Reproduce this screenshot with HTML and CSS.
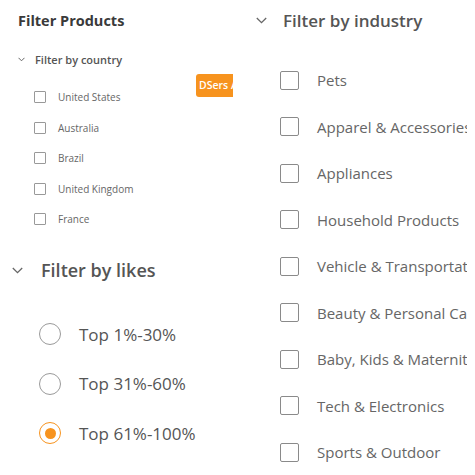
FILE: index.html
```html
<!DOCTYPE html>
<html>
<head>
<meta charset="utf-8">
<link rel="stylesheet" href="styles.css">
</head>
<body>
<div class="page">
  <div class="col-left">
    <div class="title">Filter Products</div>
    <div class="sub-head">
      <svg class="chev-s" width="7" height="5" viewBox="0 0 7 5"><polyline points="0.5,0.8 3.5,3.8 6.5,0.8" fill="none" stroke="#666" stroke-width="1"/></svg>
      <span>Filter by country</span>
    </div>
    <div class="country-list">
      <div class="crow"><span class="cbox-s"></span><span>United States</span></div>
      <div class="crow"><span class="cbox-s"></span><span>Australia</span></div>
      <div class="crow"><span class="cbox-s"></span><span>Brazil</span></div>
      <div class="crow"><span class="cbox-s"></span><span>United Kingdom</span></div>
      <div class="crow"><span class="cbox-s"></span><span>France</span></div>
    </div>
    <div class="likes-head">
      <svg class="chev-m" width="11" height="7" viewBox="0 0 11 7"><polyline points="0.8,1 5.5,5.7 10.2,1" fill="none" stroke="#666" stroke-width="1.3"/></svg>
      <span>Filter by likes</span>
    </div>
    <div class="radio-list">
      <div class="rrow"><span class="radio"></span><span>Top 1%-30%</span></div>
      <div class="rrow"><span class="radio"></span><span>Top 31%-60%</span></div>
      <div class="rrow"><span class="radio on"></span><span>Top 61%-100%</span></div>
    </div>
    <div class="badge">DSers App</div>
  </div>
  <div class="col-right">
    <div class="ind-head">
      <svg class="chev-m" width="11" height="7" viewBox="0 0 11 7"><polyline points="0.8,1 5.5,5.7 10.2,1" fill="none" stroke="#666" stroke-width="1.3"/></svg>
      <span>Filter by industry</span>
    </div>
    <div class="ind-list">
      <div class="irow"><span class="cbox"></span><span>Pets</span></div>
      <div class="irow"><span class="cbox"></span><span>Apparel &amp; Accessories</span></div>
      <div class="irow"><span class="cbox"></span><span>Appliances</span></div>
      <div class="irow"><span class="cbox"></span><span>Household Products</span></div>
      <div class="irow"><span class="cbox"></span><span>Vehicle &amp; Transportation</span></div>
      <div class="irow"><span class="cbox"></span><span>Beauty &amp; Personal Care</span></div>
      <div class="irow"><span class="cbox"></span><span>Baby, Kids &amp; Maternity</span></div>
      <div class="irow"><span class="cbox"></span><span>Tech &amp; Electronics</span></div>
      <div class="irow"><span class="cbox"></span><span>Sports &amp; Outdoor</span></div>
    </div>
  </div>
</div>
</body>
</html>
```
FILE: styles.css
```css
html, body {
  margin: 0;
  padding: 0;
  background: #fff;
}
body {
  font-family: "Open Sans", "Noto Sans", sans-serif;
  color: #555;
}
.page {
  display: flex;
  width: 475px;
  height: 475px;
  overflow: hidden;
}
.col-left {
  position: relative;
  width: 233px;
  flex: none;
  overflow: hidden;
}
.title {
  margin-top: 11px;
  padding-left: 18px;
  height: 20px;
  line-height: 20px;
  font-size: 14.5px;
  font-weight: 700;
  color: #3a3a3a;
}
.sub-head {
  margin-top: 18px;
  height: 20px;
  display: flex;
  align-items: center;
  padding-left: 18px;
  font-size: 11px;
  font-weight: 600;
  color: #555;
}
.chev-s {
  margin-right: 10px;
}
.country-list {
  margin-top: 12.75px;
  padding-left: 34px;
}
.crow {
  height: 30.5px;
  display: flex;
  align-items: center;
  font-size: 10px;
  color: #666;
}
.cbox-s {
  width: 10px;
  height: 10px;
  border: 1px solid #999;
  border-radius: 1px;
  margin-right: 12px;
  flex: none;
}
.likes-head {
  margin-top: 24px;
  height: 24px;
  display: flex;
  align-items: center;
  padding-left: 12px;
  font-size: 18px;
  font-weight: 600;
  color: #555;
}
.likes-head .chev-m {
  margin-right: 18px;
}
.radio-list {
  margin-top: 27px;
  padding-left: 39px;
}
.rrow {
  height: 49.5px;
  display: flex;
  align-items: center;
  font-size: 17px;
  color: #555;
}
.radio {
  width: 20px;
  height: 20px;
  border: 1.5px solid #9a9a9a;
  border-radius: 50%;
  margin-right: 18px;
  flex: none;
  display: flex;
  align-items: center;
  justify-content: center;
}
.radio.on {
  border-color: #f7931e;
}
.radio.on::after {
  content: "";
  width: 11px;
  height: 11px;
  border-radius: 50%;
  background: #f7931e;
}
.badge {
  position: absolute;
  left: 196px;
  top: 74px;
  height: 23px;
  line-height: 23px;
  padding: 0 6px 0 3px;
  background: #f7931e;
  color: #fff;
  border-radius: 3px;
  font-size: 10.5px;
  font-weight: 600;
  white-space: nowrap;
}
.col-right {
  width: 234px;
  flex: none;
  overflow: hidden;
}
.ind-head {
  margin-top: 8px;
  height: 24px;
  display: flex;
  align-items: center;
  padding-left: 23px;
  font-size: 17px;
  font-weight: 600;
  color: #555;
}
.ind-head .chev-m {
  margin-right: 16px;
}
.ind-list {
  margin-top: 24.75px;
  padding-left: 47px;
}
.irow {
  height: 46.5px;
  display: flex;
  align-items: center;
  font-size: 15px;
  color: #666;
  white-space: nowrap;
}
.cbox {
  width: 17px;
  height: 17px;
  border: 1.2px solid #8a8a8a;
  border-radius: 2px;
  margin-right: 18px;
  flex: none;
}
```
